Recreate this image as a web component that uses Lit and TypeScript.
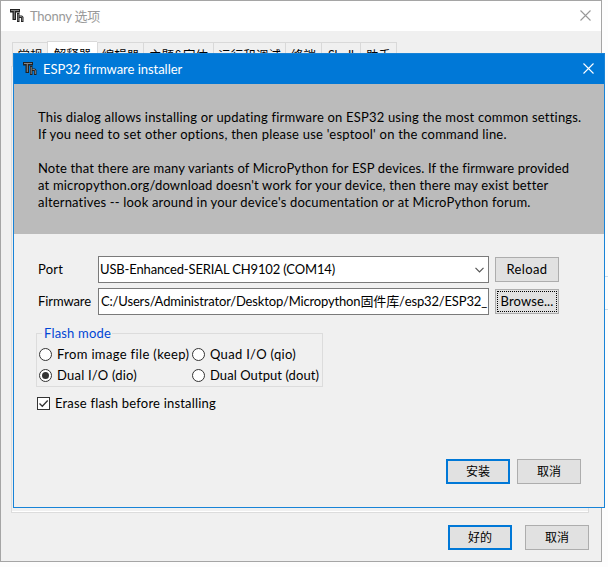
import { LitElement, html, css } from "lit";
import { customElement, property } from "lit/decorators.js";

/** A single line of text tracked to a given width. */
@customElement("text-run")
class TextRun extends LitElement {
  @property({ type: Number }) width = 0;
  @property() text = "";
  static styles = css`
    :host { display: block; white-space: pre; }
    span { display: inline-block; }
  `;
  render() { return html`<span>${this.text}</span>`; }
  async updated() {
    await document.fonts.ready;
    const span = this.renderRoot.querySelector("span") as HTMLElement;
    span.style.letterSpacing = "0px";
    const natural = span.getBoundingClientRect().width;
    span.style.letterSpacing = (this.width - natural) / this.text.length + "px";
  }
}

const logo = html`<svg class="logo" width="14" height="14" viewBox="0 0 14 14">
  <path d="M0 0H10V3.500H6V11H2.500V3.500H0Z" fill="#222"/>
  <path d="M1 1.500H9M4.300 2V10" fill="none" stroke="#858585" stroke-width="1.1"/>
  <path d="M7 4H9.500V6.500H12L13.500 8V13H11V9H9.500V13H7Z" fill="#222"/>
  <path d="M8.200 5V12M9.500 7.500H11.500L12.300 8.500V12" fill="none" stroke="#909090" stroke-width=".9"/>
</svg>`;
const cross = html`<svg class="cross" width="11" height="11" viewBox="0 0 11 11">
  <path d="M.5 .5L10.500 10.500M10.500 .5L.5 10.500" fill="none" stroke="currentColor" stroke-width="1.1"/>
</svg>`;

const tabs: [string, number][] = [
  ["常规", 35], ["解释器", 50], ["编辑器", 46], ["主题&字体", 70],
  ["运行和调试", 72], ["终端", 36], ["Shell", 39], ["助手", 37],
];
const notes: [string, number][] = [
  ["This dialog allows installing or updating firmware on ESP32 using the most common settings.", 543],
  ["If you need to set other options, then please use 'esptool' on the command line.", 469],
  ["", 0],
  ["Note that there are many variants of MicroPython for ESP devices. If the firmware provided", 531],
  ["at micropython.org/download doesn't work for your device, then there may exist better", 510],
  ["alternatives -- look around in your device's documentation or at MicroPython forum.", 493],
];
const modes: [string, number, boolean][] = [
  ["From image file (keep)", 132, false], ["Quad I/O (qio)", 86, false],
  ["Dual I/O (dio)", 80, true], ["Dual Output (dout)", 109, false],
];

@customElement("app-root")
class AppRoot extends LitElement {
  static styles = css`
    :host {
      display: block; position: relative; width: 608px; height: 567px; overflow: hidden;
      background: #fdfdfd; color: #000;
      font: 13px/17px Lato, "Noto Sans CJK SC", sans-serif;
    }
    * { box-sizing: border-box; }
    .options { width: 602px; height: 562px; border: 1px solid #a5a5a5; background: #f0f0f0; display: flex; flex-direction: column; }
    .bar { display: flex; align-items: center; }
    .options > .bar { height: 30px; flex: none; background: #fff; color: #999; padding: 0 10px 0 9px; }
    .bar text-run { margin-left: 6px; flex: 1; }
    .cross { margin-bottom: 2px; }
    .tabs { display: flex; margin: 10px 0 0 11px; height: 25px; align-items: flex-end; }
    .tab { height: 24px; border: 1px solid #d9d9d9; border-right: 0; display: flex; justify-content: center; padding-top: 4px; white-space: nowrap; font-size: 12.5px; overflow: hidden; }
    .tab:last-child { border-right: 1px solid #d9d9d9; }
    .tab.active { height: 25px; background: #fff; }
    .pane { margin: 0 12px 0 10px; height: 447px; border: 1px solid #dcdcdc; box-shadow: inset 0 -1px #fff; }
    .actions { display: flex; justify-content: flex-end; }
    .options > .actions { gap: 13px; padding: 12px 12px 0 0; }
    .btn { width: 64px; height: 25px; border: 1px solid #adadad; background: #e1e1e1; display: flex; align-items: center; justify-content: center; font-size: 12px; }
    .btn text-run { font-size: 13px; }
    .btn.primary { border: 2px solid #0078d7; }
    .edge { position: absolute; left: 605px; top: 276px; width: 3px; height: 34px; border: solid #c9dceb; border-width: 1px 0; }
    .dialog { position: absolute; left: 13px; top: 53px; width: 592px; height: 455px; border: 1px solid #1883d7; background: #f0f0f0; display: flex; flex-direction: column; }
    .dialog > .bar { height: 30px; flex: none; background: #0078d7; color: #fff; padding: 0 10px 0 9px; }
    .notes { height: 150px; flex: none; background: #bbb; padding: 25px 0 0 24px; }
    .notes text-run { height: 17px; }
    .form { display: grid; grid-template-columns: 54px 391px 64px; column-gap: 6px; row-gap: 5px; padding: 22px 0 0 24px; align-items: center; }
    .field { height: 27px; border: 1px solid #7a7a7a; background: #fff; display: flex; align-items: center; justify-content: space-between; padding: 0 4px 0 2px; overflow: hidden; }
    .field.combo { padding-left: 1px; }
    .browse { outline: 1px dotted #000; outline-offset: -3px; }
    .modes { margin: 11px 0 0 22px; width: 287px; height: 61px; position: relative; display: flex; align-items: flex-end; }
    .frame { width: 287px; height: 54px; border: 1px solid #dcdcdc; display: grid; grid-template-columns: 153px 1fr; grid-auto-rows: 21px; align-content: start; padding: 10px 0 0 2px; }
    .legend { position: absolute; left: 6px; top: -1px; padding: 0 1px 0 2px; background: #f0f0f0; color: #0046d5; }
    .choice { display: flex; align-items: center; gap: 5px; height: 21px; }
    .radio { width: 13px; height: 13px; flex: none; border: 1px solid #333; border-radius: 50%; background: #fff; display: grid; place-items: center; }
    .dot { width: 7px; height: 7px; border-radius: 50%; background: #333; }
    .erase { display: flex; align-items: center; gap: 5px; margin: 8px 0 0 23px; height: 17px; }
    .check { width: 13px; height: 13px; border: 1px solid #333; background: #fff; display: block; }
    .check svg { display: block; }
    .dialog > .actions { gap: 7px; margin-top: auto; padding: 0 23px 23px 0; }
  `;
  render() {
    return html`
      <div class="options">
        <div class="bar">${logo}<text-run text="Thonny 选项" .width=${70}></text-run>${cross}</div>
        <div class="tabs">${tabs.map(([t, w], i) => html`<div class="tab ${i === 1 ? "active" : ""}" style="width:${w}px">${t}</div>`)}</div>
        <div class="pane"></div>
        <div class="actions"><div class="btn primary">好的</div><div class="btn">取消</div></div>
      </div>
      <div class="edge"></div>
      <div class="dialog">
        <div class="bar">${logo}<text-run text="ESP32 firmware installer" .width=${139}></text-run>${cross}</div>
        <div class="notes">${notes.map(([t, w]) => html`<text-run .text=${t} .width=${w}></text-run>`)}</div>
        <div class="form">
          <text-run text="Port" .width=${25}></text-run>
          <div class="field combo"><text-run text="USB-Enhanced-SERIAL CH9102 (COM14)" .width=${235}></text-run>
            <svg width="9" height="6" viewBox="0 0 9 6"><path d="M.5 .8L4.500 4.800L8.500 .8" fill="none" stroke="#555" stroke-width="1.2"/></svg></div>
          <div class="btn"><text-run text="Reload" .width=${41}></text-run></div>
          <text-run text="Firmware" .width=${53}></text-run>
          <div class="field"><text-run text="C:/Users/Administrator/Desktop/Micropython固件库/esp32/ESP32_" .width=${386}></text-run></div>
          <div class="btn browse"><text-run text="Browse..." .width=${53}></text-run></div>
        </div>
        <div class="modes">
          <div class="frame">${modes.map(([t, w, on]) => html`<div class="choice"><span class="radio">${on ? html`<span class="dot"></span>` : ""}</span><text-run .text=${t} .width=${w}></text-run></div>`)}</div>
          <text-run class="legend" text="Flash mode" .width=${67}></text-run>
        </div>
        <div class="erase"><span class="check"><svg width="11" height="11" viewBox="0 0 11 11"><path d="M1.500 5.500L4.300 8.300L9.700 2.500" fill="none" stroke="#333" stroke-width="1.3"/></svg></span><text-run text="Erase flash before installing" .width=${161}></text-run></div>
        <div class="actions"><div class="btn primary">安装</div><div class="btn">取消</div></div>
      </div>`;
  }
}
